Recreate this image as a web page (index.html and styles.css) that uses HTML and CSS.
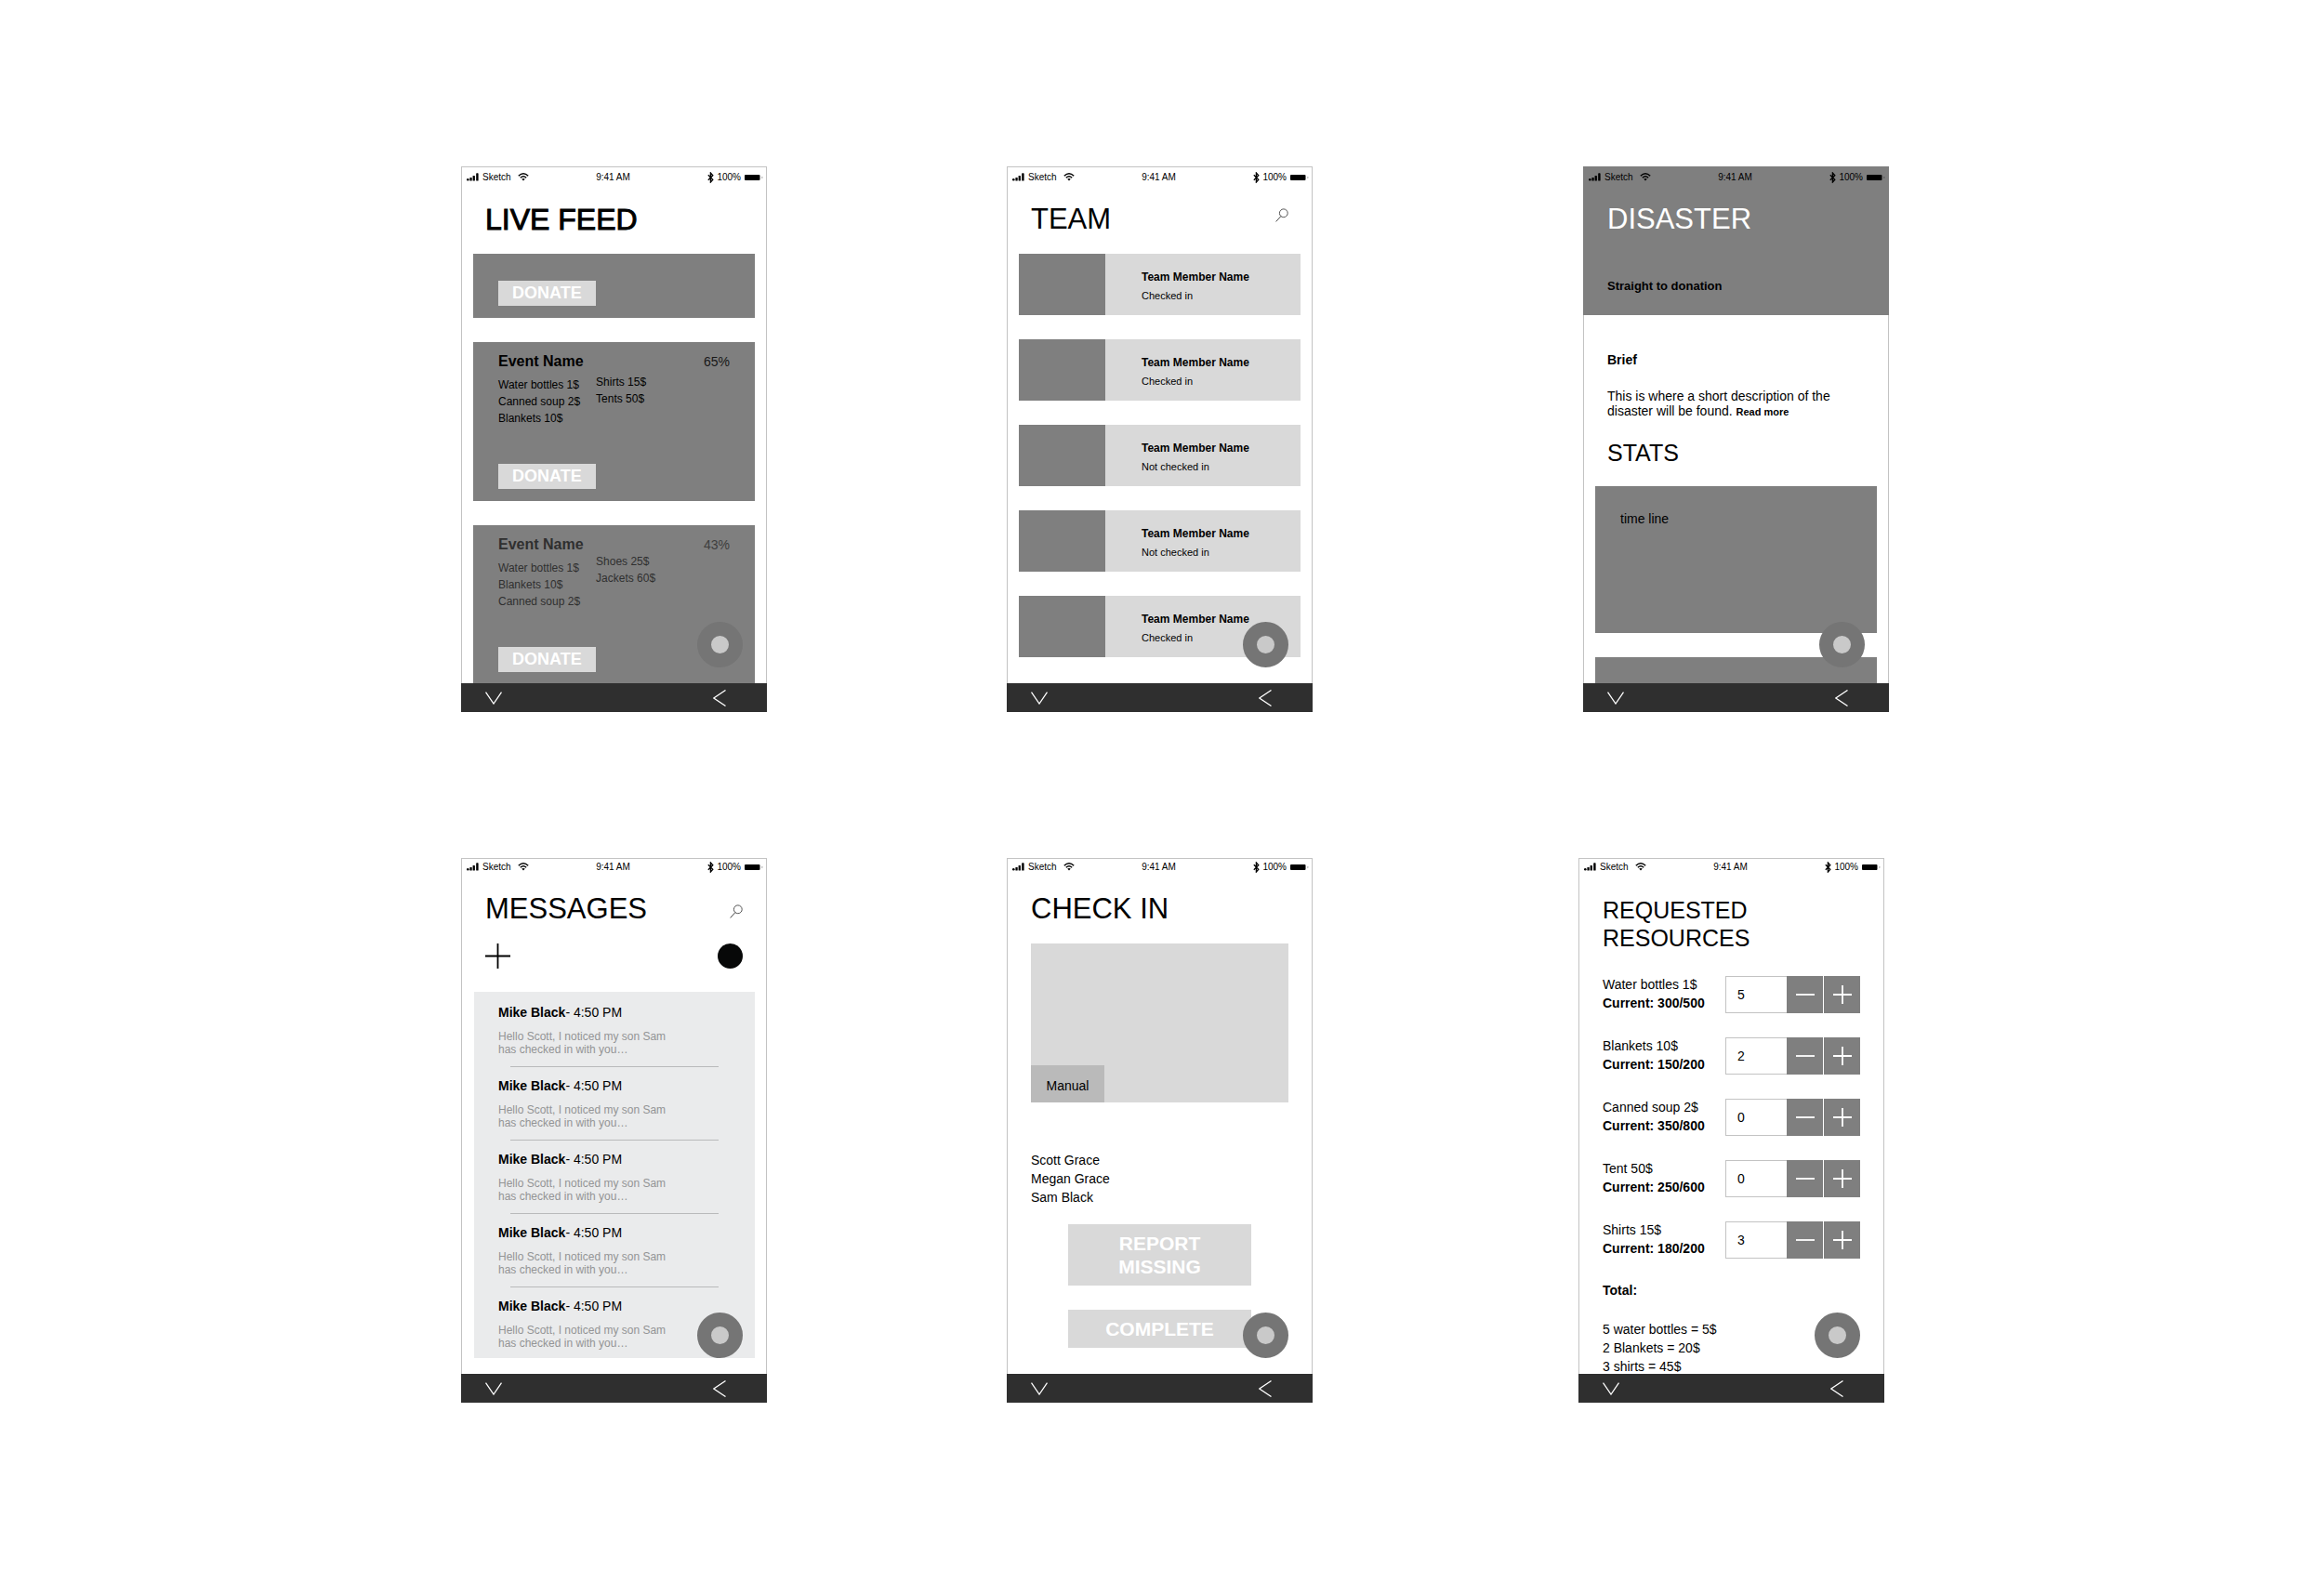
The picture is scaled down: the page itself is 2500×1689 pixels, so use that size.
FILE: index.html
```html
<!DOCTYPE html>
<html lang="en">
<head>
<meta charset="utf-8">
<meta name="viewport" content="width=device-width, initial-scale=1">
<title>Disaster relief app wireframes</title>
<link rel="stylesheet" href="styles.css">
</head>
<body>
<svg class="sprite" aria-hidden="true">
  <symbol id="signal" viewBox="0 0 13 9"><circle cx="1.3" cy="7.3" r="1.3"/><rect x="3.4" y="5" width="2.3" height="3.5" rx=".6"/><rect x="6.6" y="3" width="2.3" height="5.5" rx=".6"/><rect x="10.2" y="0.3" width="2.4" height="8.2" rx=".6"/></symbol>
  <symbol id="wifi" viewBox="0 0 12 9"><path d="M.8 3.2Q6-1.6 11.2 3.2M2.8 5.2Q6 2.4 9.2 5.2" fill="none" stroke="currentColor" stroke-width="1.5"/><path d="M4.2 6.6Q6 5.2 7.8 6.6L6 8.5z"/></symbol>
  <symbol id="bluetooth" viewBox="0 0 7 12"><path d="M.8 3.2L5.8 8.2 3.4 11V1L5.8 3.7.8 8.7" fill="none" stroke="currentColor" stroke-width="1.3"/></symbol>
  <symbol id="battery" viewBox="0 0 20 8"><rect x="0" y="1" width="16.5" height="6" rx="1"/><path d="M18.6 2.8q1.6 1.2 0 2.4z" opacity=".6"/></symbol>
  <symbol id="search" viewBox="0 0 14 15"><path d="M6 8.5L.6 14.4" fill="none" stroke="currentColor"/><circle cx="8.8" cy="5.3" r="4.4" fill="none" stroke="currentColor" stroke-width=".9"/></symbol>
  <symbol id="down" viewBox="0 0 18 14"><path d="M.5 .6L9 13 17.5 .6" fill="none" stroke="currentColor" stroke-width="1.3"/></symbol>
  <symbol id="back" viewBox="0 0 14 18"><path d="M13.5 .5L.8 9 13.5 17.5" fill="none" stroke="currentColor" stroke-width="1.3"/></symbol>
  <symbol id="minus" viewBox="0 0 20 20"><path d="M0 10H20" stroke="currentColor" stroke-width="1.8"/></symbol>
  <symbol id="plus" viewBox="0 0 20 20"><path d="M0 10H20M10 0V20" stroke="currentColor" stroke-width="1.8"/></symbol>
  <symbol id="compose" viewBox="0 0 27 27"><path d="M0 13.5H27M13.5 0V27" stroke="currentColor" stroke-width="1.8"/></symbol>
</svg>

<main class="board">
  <div class="board-row">

    <section class="phone">
      <div class="screen">
        <div class="status">
          <div class="status-side"><svg class="i-signal"><use href="#signal"/></svg><span class="carrier">Sketch</span><svg class="i-wifi"><use href="#wifi"/></svg></div>
          <span class="clock">9:41 AM</span>
          <div class="status-side status-end"><svg class="i-bluetooth"><use href="#bluetooth"/></svg><span class="charge">100%</span><svg class="i-battery"><use href="#battery"/></svg></div>
        </div>
        <header class="header"><h1 class="title title-strong">LIVE FEED</h1></header>
        <div class="stack">
          <article class="event event-cut"><button class="donate">DONATE</button></article>
          <article class="event">
            <div class="event-head"><h2 class="event-name">Event Name</h2><span class="percent">65%</span></div>
            <div class="needs">
              <ul class="list"><li>Water bottles 1$</li><li>Canned soup 2$</li><li>Blankets 10$</li></ul>
              <ul class="list list-raised"><li>Shirts 15$</li><li>Tents 50$</li></ul>
            </div>
            <button class="donate">DONATE</button>
          </article>
          <article class="event event-dim">
            <div class="event-head"><h2 class="event-name">Event Name</h2><span class="percent">43%</span></div>
            <div class="needs">
              <ul class="list"><li>Water bottles 1$</li><li>Blankets 10$</li><li>Canned soup 2$</li></ul>
              <ul class="list list-high"><li>Shoes 25$</li><li>Jackets 60$</li></ul>
            </div>
            <button class="donate">DONATE</button>
          </article>
        </div>
      </div>
      <nav class="nav"><button aria-label="Down"><svg class="i-down"><use href="#down"/></svg></button><button aria-label="Back"><svg class="i-back"><use href="#back"/></svg></button></nav>
      <button class="fab" aria-label="Menu"></button>
    </section>

    <section class="phone">
      <div class="screen">
        <div class="status">
          <div class="status-side"><svg class="i-signal"><use href="#signal"/></svg><span class="carrier">Sketch</span><svg class="i-wifi"><use href="#wifi"/></svg></div>
          <span class="clock">9:41 AM</span>
          <div class="status-side status-end"><svg class="i-bluetooth"><use href="#bluetooth"/></svg><span class="charge">100%</span><svg class="i-battery"><use href="#battery"/></svg></div>
        </div>
        <header class="header"><h1 class="title">TEAM</h1><button class="search" aria-label="Search"><svg class="i-search"><use href="#search"/></svg></button></header>
        <div class="stack">
          <article class="member"><div class="photo"></div><div class="member-text"><h2 class="member-name">Team Member Name</h2><p class="member-state">Checked in</p></div></article>
          <article class="member"><div class="photo"></div><div class="member-text"><h2 class="member-name">Team Member Name</h2><p class="member-state">Checked in</p></div></article>
          <article class="member"><div class="photo"></div><div class="member-text"><h2 class="member-name">Team Member Name</h2><p class="member-state">Not checked in</p></div></article>
          <article class="member"><div class="photo"></div><div class="member-text"><h2 class="member-name">Team Member Name</h2><p class="member-state">Not checked in</p></div></article>
          <article class="member"><div class="photo"></div><div class="member-text"><h2 class="member-name">Team Member Name</h2><p class="member-state">Checked in</p></div></article>
        </div>
      </div>
      <nav class="nav"><button aria-label="Down"><svg class="i-down"><use href="#down"/></svg></button><button aria-label="Back"><svg class="i-back"><use href="#back"/></svg></button></nav>
      <button class="fab" aria-label="Menu"></button>
    </section>

    <section class="phone">
      <div class="screen">
        <div class="hero">
          <div class="status">
            <div class="status-side"><svg class="i-signal"><use href="#signal"/></svg><span class="carrier">Sketch</span><svg class="i-wifi"><use href="#wifi"/></svg></div>
            <span class="clock">9:41 AM</span>
            <div class="status-side status-end"><svg class="i-bluetooth"><use href="#bluetooth"/></svg><span class="charge">100%</span><svg class="i-battery"><use href="#battery"/></svg></div>
          </div>
          <header class="header"><h1 class="title">DISASTER</h1></header>
          <a class="hero-link" href="#donate">Straight to donation</a>
        </div>
        <div class="brief">
          <h2 class="label">Brief</h2>
          <p class="brief-text">This is where a short description of the disaster will be found. <a class="more" href="#more">Read more</a></p>
          <h2 class="subtitle">STATS</h2>
        </div>
        <div class="stack">
          <div class="chart">time line</div>
          <div class="chart"></div>
        </div>
      </div>
      <nav class="nav"><button aria-label="Down"><svg class="i-down"><use href="#down"/></svg></button><button aria-label="Back"><svg class="i-back"><use href="#back"/></svg></button></nav>
      <button class="fab" aria-label="Menu"></button>
    </section>
  </div>

  <div class="board-row board-row-lower">

    <section class="phone">
      <div class="screen">
        <div class="status">
          <div class="status-side"><svg class="i-signal"><use href="#signal"/></svg><span class="carrier">Sketch</span><svg class="i-wifi"><use href="#wifi"/></svg></div>
          <span class="clock">9:41 AM</span>
          <div class="status-side status-end"><svg class="i-bluetooth"><use href="#bluetooth"/></svg><span class="charge">100%</span><svg class="i-battery"><use href="#battery"/></svg></div>
        </div>
        <header class="header header-low"><h1 class="title">MESSAGES</h1><button class="search" aria-label="Search"><svg class="i-search"><use href="#search"/></svg></button></header>
        <div class="tools"><button aria-label="New message"><svg class="i-compose"><use href="#compose"/></svg></button><button class="avatar" aria-label="Profile"></button></div>
        <ul class="inbox">
          <li class="message"><h2 class="from"><b>Mike Black</b>- 4:50 PM</h2><p class="preview">Hello Scott, I noticed my son Sam<br>has checked in with you…</p><hr class="rule"></li>
          <li class="message"><h2 class="from"><b>Mike Black</b>- 4:50 PM</h2><p class="preview">Hello Scott, I noticed my son Sam<br>has checked in with you…</p><hr class="rule"></li>
          <li class="message"><h2 class="from"><b>Mike Black</b>- 4:50 PM</h2><p class="preview">Hello Scott, I noticed my son Sam<br>has checked in with you…</p><hr class="rule"></li>
          <li class="message"><h2 class="from"><b>Mike Black</b>- 4:50 PM</h2><p class="preview">Hello Scott, I noticed my son Sam<br>has checked in with you…</p><hr class="rule"></li>
          <li class="message"><h2 class="from"><b>Mike Black</b>- 4:50 PM</h2><p class="preview">Hello Scott, I noticed my son Sam<br>has checked in with you…</p></li>
        </ul>
      </div>
      <nav class="nav"><button aria-label="Down"><svg class="i-down"><use href="#down"/></svg></button><button aria-label="Back"><svg class="i-back"><use href="#back"/></svg></button></nav>
      <button class="fab" aria-label="Menu"></button>
    </section>

    <section class="phone">
      <div class="screen">
        <div class="status">
          <div class="status-side"><svg class="i-signal"><use href="#signal"/></svg><span class="carrier">Sketch</span><svg class="i-wifi"><use href="#wifi"/></svg></div>
          <span class="clock">9:41 AM</span>
          <div class="status-side status-end"><svg class="i-bluetooth"><use href="#bluetooth"/></svg><span class="charge">100%</span><svg class="i-battery"><use href="#battery"/></svg></div>
        </div>
        <header class="header"><h1 class="title">CHECK IN</h1></header>
        <div class="scanner"><button class="manual">Manual</button></div>
        <ul class="people"><li>Scott Grace</li><li>Megan Grace</li><li>Sam Black</li></ul>
        <div class="actions"><button class="action">REPORT<br>MISSING</button><button class="action">COMPLETE</button></div>
      </div>
      <nav class="nav"><button aria-label="Down"><svg class="i-down"><use href="#down"/></svg></button><button aria-label="Back"><svg class="i-back"><use href="#back"/></svg></button></nav>
      <button class="fab" aria-label="Menu"></button>
    </section>

    <section class="phone">
      <div class="screen">
        <div class="status">
          <div class="status-side"><svg class="i-signal"><use href="#signal"/></svg><span class="carrier">Sketch</span><svg class="i-wifi"><use href="#wifi"/></svg></div>
          <span class="clock">9:41 AM</span>
          <div class="status-side status-end"><svg class="i-bluetooth"><use href="#bluetooth"/></svg><span class="charge">100%</span><svg class="i-battery"><use href="#battery"/></svg></div>
        </div>
        <div class="request">
          <h1 class="subtitle">REQUESTED<br>RESOURCES</h1>
          <div class="resources">
            <div class="resource"><label for="water">Water bottles 1$<br><b>Current: 300/500</b></label><div class="stepper"><input id="water" type="text" value="5"><button aria-label="Less"><svg class="i-step"><use href="#minus"/></svg></button><button aria-label="More"><svg class="i-step"><use href="#plus"/></svg></button></div></div>
            <div class="resource"><label for="blankets">Blankets 10$<br><b>Current: 150/200</b></label><div class="stepper"><input id="blankets" type="text" value="2"><button aria-label="Less"><svg class="i-step"><use href="#minus"/></svg></button><button aria-label="More"><svg class="i-step"><use href="#plus"/></svg></button></div></div>
            <div class="resource"><label for="soup">Canned soup 2$<br><b>Current: 350/800</b></label><div class="stepper"><input id="soup" type="text" value="0"><button aria-label="Less"><svg class="i-step"><use href="#minus"/></svg></button><button aria-label="More"><svg class="i-step"><use href="#plus"/></svg></button></div></div>
            <div class="resource"><label for="tent">Tent 50$<br><b>Current: 250/600</b></label><div class="stepper"><input id="tent" type="text" value="0"><button aria-label="Less"><svg class="i-step"><use href="#minus"/></svg></button><button aria-label="More"><svg class="i-step"><use href="#plus"/></svg></button></div></div>
            <div class="resource"><label for="shirts">Shirts 15$<br><b>Current: 180/200</b></label><div class="stepper"><input id="shirts" type="text" value="3"><button aria-label="Less"><svg class="i-step"><use href="#minus"/></svg></button><button aria-label="More"><svg class="i-step"><use href="#plus"/></svg></button></div></div>
          </div>
          <h2 class="label">Total:</h2>
          <ul class="totals"><li>5 water bottles = 5$</li><li>2 Blankets = 20$</li><li>3 shirts = 45$</li></ul>
        </div>
      </div>
      <nav class="nav"><button aria-label="Down"><svg class="i-down"><use href="#down"/></svg></button><button aria-label="Back"><svg class="i-back"><use href="#back"/></svg></button></nav>
      <button class="fab" aria-label="Menu"></button>
    </section>
  </div>
</main>
</body>
</html>
```
FILE: styles.css
```css
:root {
  --gray: #7f7f7f;
  --light: #d9d9d9;
  --line: #c3c3c3;
  --bar: #2f2f2f;
}

* { box-sizing: border-box; }

body, h1, h2, p, ul { margin: 0; padding: 0; }

ul { list-style: none; }

body {
  background: #fff;
  color: #000;
  font: 14px/20px "Liberation Sans", Arial, sans-serif;
}

button {
  display: block;
  margin: 0;
  padding: 0;
  border: 0;
  background: none;
  color: inherit;
  font: inherit;
  cursor: pointer;
}

a { color: inherit; text-decoration: none; }

svg { display: block; flex: none; fill: currentColor; }

.sprite { position: absolute; width: 0; height: 0; }

/* Board: two rows of phones, columns shared out in proportion to the window */
.board {
  display: grid;
  gap: 157px;
  padding: 179px 0 180px;
}

.board-row {
  display: grid;
  grid-template-columns: 496fr minmax(320px, 329fr) 258fr minmax(320px, 329fr) 291fr minmax(320px, 329fr) 468fr;
}

.board-row-lower {
  grid-template-columns: 496fr minmax(320px, 329fr) 258fr minmax(320px, 329fr) 286fr minmax(320px, 329fr) 473fr;
}

.phone:nth-child(1) { grid-column: 2; }
.phone:nth-child(2) { grid-column: 4; }
.phone:nth-child(3) { grid-column: 6; }

/* Phone */
.phone {
  position: relative;
  display: flex;
  flex-direction: column;
}

.screen {
  height: 556px;
  overflow: hidden;
  box-shadow: inset 1px 1px 0 var(--line), inset -1px 0 0 var(--line);
}

.board-row-lower .screen { height: 555px; }

.status {
  display: grid;
  grid-template-columns: 1fr auto 1fr;
  align-items: center;
  height: 23px;
  padding: 0 4px 0 6px;
  font-size: 10px;
  line-height: 12px;
}

.board-row-lower .status { height: 19px; }

.status-side { display: flex; align-items: center; }
.status-end { justify-content: flex-end; }
.carrier { margin: 0 7px 0 4px; }
.clock { padding-right: 4px; }
.charge { margin: 0 4px 0 3px; }

.i-signal { width: 13px; height: 9px; }
.i-wifi { width: 12px; height: 9px; }
.i-bluetooth { width: 7px; height: 12px; }
.i-battery { width: 20px; height: 8px; }
.i-search { width: 14px; height: 15px; }
.i-down { width: 18px; height: 14px; }
.i-back { width: 14px; height: 18px; }
.i-step { width: 20px; height: 20px; }
.i-compose { width: 27px; height: 27px; }

.header {
  display: flex;
  align-items: flex-start;
  justify-content: space-between;
  padding: 14px 26px 17px;
}

.board-row-lower .header { padding-top: 16px; }

.header-low { align-items: flex-end; }

.title { font-size: 31px; line-height: 40px; font-weight: 400; }
.title-strong { font-size: 32px; -webkit-text-stroke: 1px currentColor; }
.subtitle { font-size: 25px; line-height: 30px; font-weight: 400; }
.label { font-size: 14px; line-height: 20px; }

.search { padding: 8px 0 10px; color: #444; }

.stack {
  display: grid;
  gap: 26px;
  padding: 0 13px;
}

.nav {
  display: flex;
  align-items: center;
  justify-content: space-between;
  height: 31px;
  padding: 0 44px 0 26px;
  background: var(--bar);
  color: #fff;
}

/* Floating menu button, lies over the screen */
.fab {
  position: absolute;
  right: 26px;
  bottom: 48px;
  width: 49px;
  height: 49px;
  border: 15px solid #757575;
  border-radius: 50%;
  background: #c9c9c9;
}

/* Live feed */
.event {
  display: flex;
  flex-direction: column;
  height: 171px;
  padding: 11px 27px 13px;
  background: var(--gray);
}

.event-cut { height: 69px; }
.event-dim { color: #2f2f2f; }
.event-head { display: flex; justify-content: space-between; }
.event-name { font-size: 16px; line-height: 20px; }
.percent { opacity: .8; }
.needs { display: flex; gap: 17px; margin-top: 6px; }
.list { font-size: 12px; line-height: 18px; }
.list-raised { margin-top: -3px; }
.list-high { margin-top: -7px; }

.donate {
  align-self: flex-start;
  margin-top: auto;
  padding: 0 15px;
  background: var(--light);
  color: #fff;
  font-size: 18px;
  font-weight: 700;
  line-height: 27px;
}

/* Team */
.member {
  display: flex;
  height: 66px;
  background: var(--light);
}

.photo { flex: 0 0 93px; background: var(--gray); }
.member-text { padding: 15px 0 0 39px; }
.member-name { font-size: 12px; line-height: 20px; }
.member-state { font-size: 11px; line-height: 20px; }

/* Disaster */
.hero { height: 160px; background: var(--gray); }
.hero .title { color: #fff; }

.hero-link {
  display: block;
  padding: 25px 26px 0;
  font-size: 13px;
  font-weight: 700;
}

.brief { padding: 38px 26px 21px; }
.brief-text { margin: 21px 0; line-height: 16px; }
.more { font-size: 11px; font-weight: 700; }

.chart {
  height: 158px;
  padding: 25px 27px;
  background: var(--gray);
}

/* Messages */
.tools {
  display: flex;
  justify-content: space-between;
  padding: 0 26px;
}

.avatar {
  width: 27px;
  height: 27px;
  border-radius: 50%;
  background: #070808;
}

.inbox {
  height: 394px;
  margin: 25px 13px 0 14px;
  background: #eaebec;
}

.message {
  height: 79px;
  padding: 12px 26px 0;
}

.from { font-size: 14px; line-height: 20px; font-weight: 400; }

.preview {
  margin: 9px 0 11px;
  color: #939495;
  font-size: 12px;
  line-height: 14px;
}

.rule {
  height: 1px;
  margin: 0 13px;
  border: 0;
  background: #b9babb;
}

/* Check in */
.scanner {
  display: flex;
  align-items: flex-end;
  height: 171px;
  margin: 0 26px;
  background: var(--light);
}

.manual {
  width: 79px;
  height: 40px;
  padding-top: 4px;
  background: #bababa;
}

.people { padding: 52px 26px 0; }

.actions {
  display: grid;
  gap: 26px;
  padding: 19px 66px 0;
}

.action {
  padding: 8px 0;
  background: var(--light);
  color: #fff;
  font-size: 21px;
  font-weight: 700;
  line-height: 25px;
}

/* Requested resources */
.request { padding: 22px 26px 0; }

.resources {
  display: grid;
  gap: 26px;
  padding: 26px 0 24px;
}

.resource { display: flex; justify-content: space-between; }
.resource label { margin-top: -1px; }

.stepper { display: flex; }

.stepper input {
  width: 66px;
  height: 40px;
  padding: 0 12px;
  border: 1px solid var(--line);
  border-right: 0;
  border-radius: 0;
  background: #fff;
  color: inherit;
  font: inherit;
}

.stepper button {
  display: grid;
  place-items: center;
  width: 39px;
  background: var(--gray);
  color: #fff;
}

.stepper button + button { margin-left: 1px; }

.totals { margin-top: 22px; }
```
